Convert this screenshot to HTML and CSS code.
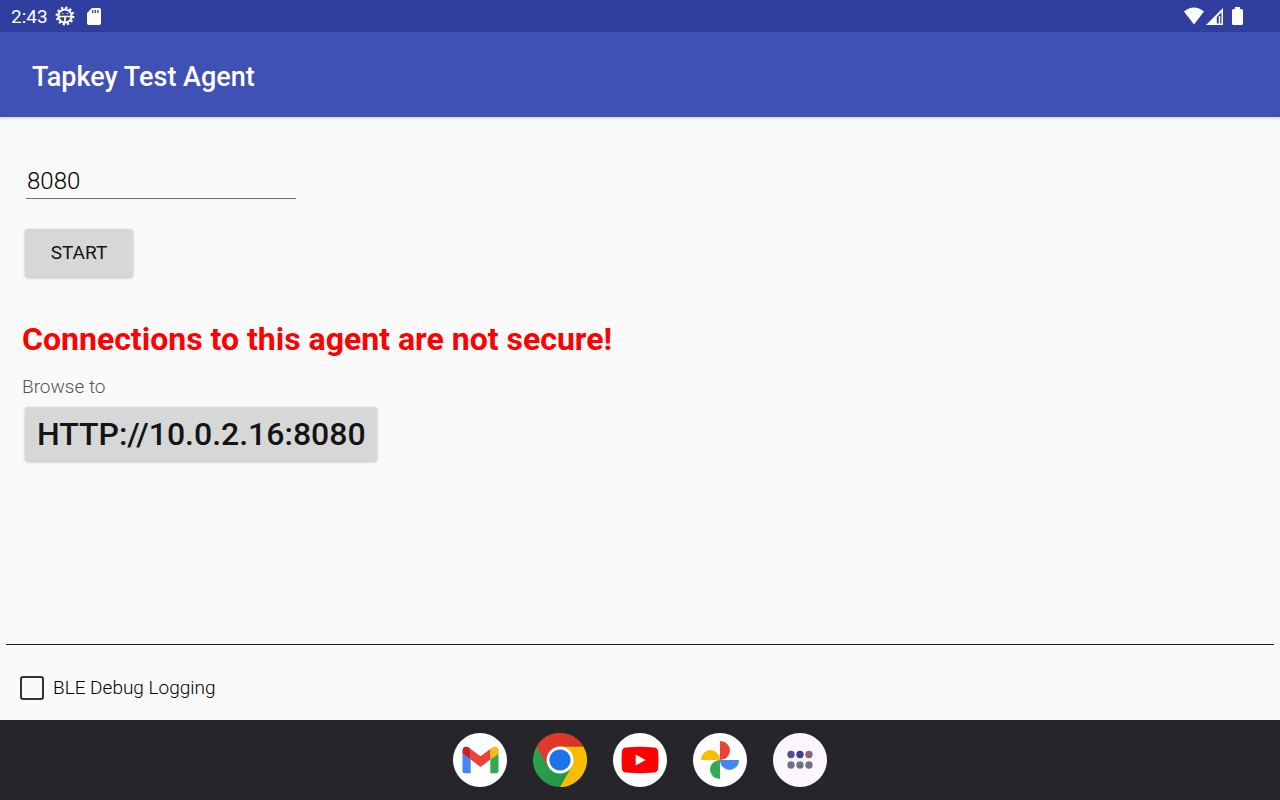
FILE: index.html
```html
<!DOCTYPE html>
<html lang="en">
<head>
<meta charset="utf-8">
<meta name="viewport" content="width=device-width, initial-scale=1">
<title>Tapkey Test Agent</title>
<link rel="stylesheet" href="styles.css">
</head>
<body>
<div class="status-bar">
  <div class="status-group">
    <span class="clock">2:43</span>
    <svg class="status-gear" width="20" height="20" viewBox="0 0 20 20" aria-hidden="true">
      <circle cx="10" cy="10" r="8.200" fill="none" stroke="#fff" stroke-width="2.400" stroke-dasharray="2.200 2.093"/>
      <circle cx="10" cy="10" r="6.600" fill="none" stroke="#fff" stroke-width="2"/>
      <path d="M3.500 10.500h13M10 10.500v6" stroke="#fff" stroke-width="1.700"/>
      <path d="M7 7.500h1.300M11.700 7.500H13" stroke="#fff" stroke-width="1"/>
    </svg>
    <svg class="status-card" width="14" height="17" viewBox="0 0 14 17" aria-hidden="true">
      <path d="M5 0h7.200Q14 0 14 1.800v13.400Q14 17 12.200 17H1.800Q0 17 0 15.200V5z" fill="#fff"/>
      <path d="M5.700 2v3M8.300 2v3M10.900 2v3" stroke="#303f9f" stroke-width="1.300"/>
    </svg>
  </div>
  <div class="status-group status-right">
    <svg width="20" height="18" viewBox="0 0 20 18" aria-hidden="true"><path d="M0 4.500Q10-3.500 20 4.500L10 17.500z" fill="#fff"/></svg>
    <svg width="17" height="17" viewBox="0 0 17 17" aria-hidden="true"><path fill-rule="evenodd" d="M17 0v17H0zM15.500 4.200L10.800 8.900v6.600h4.700z" fill="#fff"/><path d="M13.500 8v8" stroke="#fff" stroke-width="1.500"/></svg>
    <svg class="battery" width="11" height="18" viewBox="0 0 11 18" aria-hidden="true"><path d="M3 0h5v2h1.500Q11 2 11 3.500v13Q11 18 9.500 18h-8Q0 18 0 16.500v-13Q0 2 1.500 2H3z" fill="#fff"/></svg>
  </div>
</div>
<header class="app-bar"><h1 class="app-title">Tapkey Test Agent</h1></header>
<main class="content">
  <input class="port" type="text" inputmode="numeric" value="8080" aria-label="Port">
  <button class="button start" type="button">START</button>
  <p class="warning">Connections to this agent are not secure!</p>
  <p class="browse">Browse to</p>
  <button class="button address" type="button">HTTP://10.0.2.16:8080</button>
</main>
<footer class="options">
  <label class="option"><input class="check" type="checkbox">BLE Debug Logging</label>
</footer>
<nav class="dock" aria-label="Apps">
  <button class="app" type="button" aria-label="Gmail">
    <svg viewBox="0 0 54 54"><circle cx="27" cy="27" r="27" fill="#fff"/>
      <svg x="9" y="13.500" width="37" height="27" viewBox="52 42 88 66">
        <path fill="#4285f4" d="M58 108h14V74L52 59v43c0 3.320 2.690 6 6 6"/>
        <path fill="#34a853" d="M120 108h14c3.320 0 6-2.690 6-6V59l-20 15"/>
        <path fill="#fbbc04" d="M120 48v26l20-15v-8c0-7.420-8.470-11.650-14.400-7.200"/>
        <path fill="#ea4335" d="M72 74V48l24 18 24-18v26L96 92"/>
        <path fill="#c5221f" d="M52 51v8l20 15V48l-5.600-4.200c-5.940-4.450-14.400-.220-14.400 7.200"/>
      </svg>
    </svg>
  </button>
  <button class="app" type="button" aria-label="Chrome">
    <svg viewBox="0 0 54 54">
      <defs>
        <linearGradient id="green" x1="0" y1="0" x2="1" y2="1"><stop offset="0" stop-color="#34a853"/><stop offset="1" stop-color="#1e8e3e"/></linearGradient>
        <linearGradient id="red" x1="0" y1="0" x2="1" y2="0"><stop offset="0" stop-color="#e33b2e"/><stop offset="1" stop-color="#d93025"/></linearGradient>
      </defs>
      <circle cx="27" cy="27" r="27" fill="url(#green)"/>
      <path d="M50.400 13.500A27 27 0 0 1 27 54L38.700 33.750 27 13.500z" fill="#fbbc04"/>
      <path d="M3.600 13.500A27 27 0 0 1 50.400 13.500H27L15.300 33.750z" fill="url(#red)"/>
      <circle cx="27" cy="27" r="13.500" fill="#fff"/><circle cx="27" cy="27" r="10.600" fill="#1a73e8"/>
    </svg>
  </button>
  <button class="app" type="button" aria-label="YouTube">
    <svg viewBox="0 0 54 54"><circle cx="27" cy="27" r="27" fill="#fff"/>
      <path d="M13 14.400Q27 13.300 41 14.400 44.500 14.700 45 18 45.800 27 45 36 44.500 39.300 41 39.600 27 40.700 13 39.600 9.500 39.300 9 36 8.200 27 9 18 9.500 14.700 13 14.400z" fill="#f00"/>
      <path d="M22.700 21.400v11.200l10-5.600z" fill="#fff"/></svg>
  </button>
  <button class="app" type="button" aria-label="Photos">
    <svg viewBox="0 0 54 54"><circle cx="27" cy="27" r="27" fill="#fff"/>
      <path d="M27 8a10 9.500 0 0 1 0 19z" fill="#ea4335"/>
      <path d="M46 27a9.500 10 0 0 1-19 0z" fill="#4285f4"/>
      <path d="M27 46a10 9.500 0 0 1 0-19z" fill="#34a853"/>
      <path d="M8 27a9.500 10 0 0 1 19 0z" fill="#fbbc04"/></svg>
  </button>
  <button class="app" type="button" aria-label="All apps">
    <svg viewBox="0 0 54 54"><circle cx="27" cy="27" r="27" fill="#fcf7ff"/>
      <g fill="#6e7387"><circle cx="18" cy="21.500" r="3.700" fill="#4c5390"/><circle cx="27" cy="21.500" r="3.700" fill="#3a4385"/><circle cx="36" cy="21.500" r="3.700" fill="#87647f"/><circle cx="18" cy="32" r="3.700"/><circle cx="27" cy="32" r="3.700"/><circle cx="36" cy="32" r="3.700"/></g></svg>
  </button>
</nav>
</body>
</html>
```
FILE: styles.css
```css
* { box-sizing: border-box; }

body {
  margin: 0;
  min-height: 100vh;
  display: flex;
  flex-direction: column;
  background: #fafafa;
  color: #1c1c1c;
  font-family: Roboto, sans-serif;
}

svg { display: block; }

.status-bar {
  display: flex;
  justify-content: space-between;
  height: 32px;
  padding: 0 37px 0 11px;
  background: #303f9f;
  color: #fff;
}

.status-group { display: flex; align-items: center; }
.status-right { gap: 2px; }
.clock { font-size: 19px; line-height: 32px; padding-top: 1px; }
.status-gear { margin-left: 7px; }
.status-card { margin-left: 12px; }
.battery { margin-left: 7px; }

.app-bar {
  display: flex;
  align-items: center;
  padding: 29px 32px 24px;
  background: #3f51b5;
  color: #fff;
  box-shadow: 0 1px 3px rgba(0, 0, 0, .2);
}

.app-title { margin: 0; font-size: 27px; line-height: 32px; font-weight: 500; }

.content {
  flex: 1;
  display: flex;
  flex-direction: column;
  align-items: flex-start;
  padding: 48px 22px 24px;
}

.port {
  width: 270px;
  margin: 0 4px;
  padding: 1px 0 1px 1px;
  border: 0;
  border-bottom: 1px solid #6f6f6f;
  border-radius: 0;
  background: transparent;
  color: #000;
  font: 300 24px/31px Roboto, sans-serif;
  outline: 0;
}

.button {
  margin: 0 3px;
  border: 0;
  border-radius: 3px;
  background: #d6d8d7;
  color: #141414;
  font-family: Roboto, sans-serif;
  font-weight: 500;
  box-shadow: 0 1px 3px rgba(0, 0, 0, .25);
}

.start { width: 108px; margin-top: 30px; padding: 12px 0; font-size: 19px; line-height: 24px; font-weight: 400; }
.address { padding: 8px 11px 8px 12px; font-size: 32px; line-height: 38px; }

.warning { margin: 43px 0 0; color: #f00; font-size: 32px; line-height: 38px; font-weight: 700; }
.browse { margin: 17px 0 8px; color: #555; font-size: 19px; line-height: 24px; font-weight: 300; }

.options {
  margin: 0 6px;
  padding: 31px 14px 20px;
  border-top: 1px solid #1c1c1c;
}

.option {
  display: flex;
  align-items: center;
  gap: 9px;
  width: fit-content;
  color: #000;
  font-size: 19px;
  line-height: 24px;
  font-weight: 300;
}

.check {
  appearance: none;
  width: 24px;
  height: 24px;
  margin: 0;
  border: 2px solid #333;
  border-radius: 3px;
}

.check:checked { background: #3f51b5; }

.dock {
  display: flex;
  justify-content: center;
  gap: 26px;
  padding: 13px;
  background: #26262a;
}

.app { width: 54px; height: 54px; padding: 0; border: 0; border-radius: 50%; background: none; }
```
